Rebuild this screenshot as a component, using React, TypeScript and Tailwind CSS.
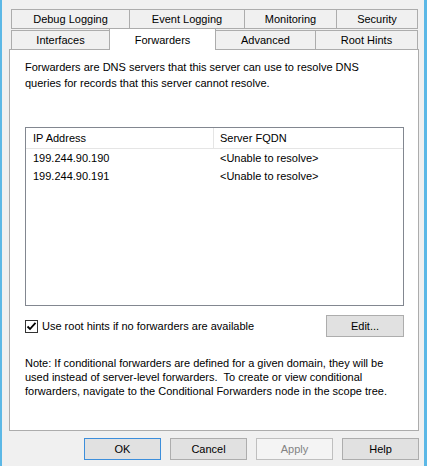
import React from 'react';

const tabsTop = [
  { label: 'Debug Logging', w: 'w-[119px]' },
  { label: 'Event Logging', w: 'w-[116px]' },
  { label: 'Monitoring', w: 'w-[93px]' },
  { label: 'Security', w: 'w-[82px]' },
];

const servers = [
  { ip: '199.244.90.190', fqdn: '<Unable to resolve>' },
  { ip: '199.244.90.191', fqdn: '<Unable to resolve>' },
];

function CheckBox() {
  return (
    <span className="flex h-[13px] w-[13px] items-center justify-center border border-[#333333] bg-white">
      <svg width="11" height="11" viewBox="0 0 11 11" fill="none">
        <path d="M1.5 5.5L4 8L9.5 1.8" stroke="#000" strokeWidth="1.8" />
      </svg>
    </span>
  );
}

export default function App() {
  return (
    <div className="flex h-[466px] w-[427px] flex-col overflow-hidden whitespace-nowrap border-l-2 border-r-[3px] border-[#5cb8e6] bg-[#f0f0f0] font-['Liberation_Sans',Arial,sans-serif] text-[11px] text-black">
      <div className="flex flex-col pl-[7px] pr-[5px] pt-[9px]">
        {/* upper tab row */}
        <div className="ml-[2px] flex">
          {tabsTop.map((t, i) => (
            <div
              key={t.label}
              className={`flex h-[20px] items-center justify-center border border-[#acacac] bg-[#f0f0f0] ${t.w} ${i > 0 ? '-ml-px' : ''}`}
            >
              {t.label}
            </div>
          ))}
        </div>

        {/* lower tab row, holds the selected tab */}
        <div className="relative z-10 -mt-px ml-[2px] flex items-end">
          <div className="flex h-[19px] w-[99px] items-center justify-center border-x border-t border-[#acacac] bg-[#f0f0f0]">
            Interfaces
          </div>
          <div className="-mb-px -ml-px flex h-[22px] w-[107px] items-start justify-center border-x border-t border-[#acacac] bg-white pt-[3px]">
            Forwarders
          </div>
          <div className="-ml-px flex h-[19px] w-[101px] items-center justify-center border-x border-t border-[#acacac] bg-[#f0f0f0]">
            Advanced
          </div>
          <div className="-ml-px flex h-[19px] w-[103px] items-center justify-center border-x border-t border-[#acacac] bg-[#f0f0f0]">
            Root Hints
          </div>
        </div>

        {/* tab page */}
        <div className="flex h-[382px] w-[410px] flex-col border border-[#acacac] bg-white pl-[15px] pt-[9px]">
          <p className="leading-[16px]">
            Forwarders are DNS servers that this server can use to resolve DNS
            <br />
            queries for records that this server cannot resolve.
          </p>

          <div className="mt-[36px] flex h-[179px] w-[379px] flex-col border border-[#828790] bg-white">
            <div className="flex h-[21px] border-b border-[#e5e5e5]">
              <div className="flex w-[188px] items-center border-r border-[#e5e5e5] pl-[7px]">IP Address</div>
              <div className="flex flex-1 items-center pl-[6px]">Server FQDN</div>
            </div>
            {servers.map((s) => (
              <div key={s.ip} className="flex h-[18px] items-center">
                <div className="w-[188px] pl-[7px]">{s.ip}</div>
                <div className="pl-[6px]">{s.fqdn}</div>
              </div>
            ))}
          </div>

          <div className="mt-[9px] flex h-[22px] w-[379px] items-center justify-between">
            <label className="flex items-center gap-[4px]">
              <CheckBox />
              <span>Use root hints if no forwarders are available</span>
            </label>
            <button className="h-[22px] w-[78px] border border-[#adadad] bg-[#e1e1e1]">Edit...</button>
          </div>

          <p className="mt-[19px] leading-[14px]">
            Note: If conditional forwarders are defined for a given domain, they will be
            <br />
            used instead of server-level forwarders.&nbsp; To create or view conditional
            <br />
            forwarders, navigate to the Conditional Forwarders node in the scope tree.
          </p>
        </div>
      </div>

      {/* dialog buttons */}
      <div className="mt-[7px] flex justify-end gap-[9px] pr-[5px]">
        <button className="h-[22px] w-[77px] border border-[#3c8edb] bg-[#e1e1e1]">OK</button>
        <button className="h-[22px] w-[77px] border border-[#adadad] bg-[#e1e1e1]">Cancel</button>
        <button className="h-[22px] w-[77px] border border-[#bfbfbf] bg-[#f4f4f4] text-[#838383]">Apply</button>
        <button className="h-[22px] w-[77px] border border-[#adadad] bg-[#e1e1e1]">Help</button>
      </div>
    </div>
  );
}
